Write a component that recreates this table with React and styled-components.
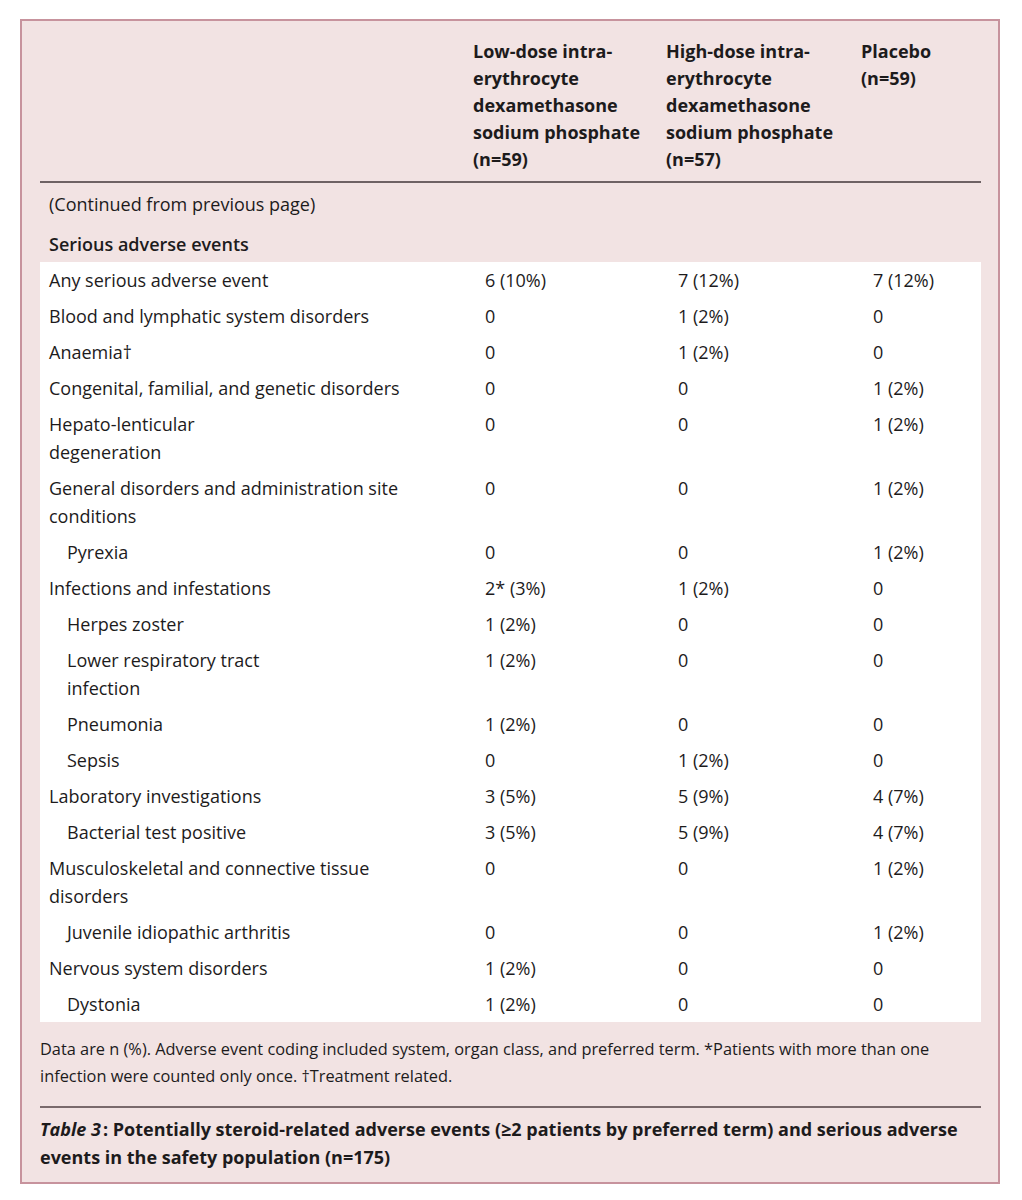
import styled, { createGlobalStyle } from 'styled-components'

const GlobalStyle = createGlobalStyle`
  body {
    margin: 0;
    background: #ffffff;
    font-family: 'Open Sans', 'Noto Sans', sans-serif;
    color: #1d1b1c;
  }
`

const rows = [
  { label: 'Any serious adverse event', values: ['6 (10%)', '7 (12%)', '7 (12%)'] },
  { label: 'Blood and lymphatic system disorders', values: ['0', '1 (2%)', '0'] },
  { label: 'Anaemia†', values: ['0', '1 (2%)', '0'] },
  { label: 'Congenital, familial, and genetic disorders', values: ['0', '0', '1 (2%)'] },
  { label: 'Hepato-lenticular degeneration', values: ['0', '0', '1 (2%)'], narrow: true },
  { label: 'General disorders and administration site conditions', values: ['0', '0', '1 (2%)'] },
  { label: 'Pyrexia', values: ['0', '0', '1 (2%)'], indent: true },
  { label: 'Infections and infestations', values: ['2* (3%)', '1 (2%)', '0'] },
  { label: 'Herpes zoster', values: ['1 (2%)', '0', '0'], indent: true },
  { label: 'Lower respiratory tract infection', values: ['1 (2%)', '0', '0'], indent: true, narrow: true },
  { label: 'Pneumonia', values: ['1 (2%)', '0', '0'], indent: true },
  { label: 'Sepsis', values: ['0', '1 (2%)', '0'], indent: true },
  { label: 'Laboratory investigations', values: ['3 (5%)', '5 (9%)', '4 (7%)'] },
  { label: 'Bacterial test positive', values: ['3 (5%)', '5 (9%)', '4 (7%)'], indent: true },
  { label: 'Musculoskeletal and connective tissue disorders', values: ['0', '0', '1 (2%)'] },
  { label: 'Juvenile idiopathic arthritis', values: ['0', '0', '1 (2%)'], indent: true },
  { label: 'Nervous system disorders', values: ['1 (2%)', '0', '0'] },
  { label: 'Dystonia', values: ['1 (2%)', '0', '0'], indent: true },
]

const headers = [
  ['Low-dose intra-', 'erythrocyte', 'dexamethasone', 'sodium phosphate', '(n=59)'],
  ['High-dose intra-', 'erythrocyte', 'dexamethasone', 'sodium phosphate', '(n=57)'],
  ['Placebo', '(n=59)'],
]

export default function App() {
  return (
    <>
      <GlobalStyle />
      <Frame>
        <HeaderRow>
          <span />
          {headers.map((lines, i) => (
            <HeadCell key={i}>
              {lines.map((l, j) => (
                <div key={j}>{l}</div>
              ))}
            </HeadCell>
          ))}
        </HeaderRow>

        <Note>(Continued from previous page)</Note>
        <Section>Serious adverse events</Section>

        <Body>
          {rows.map(r => (
            <Row key={r.label}>
              <Label indent={r.indent} narrow={r.narrow}>
                {r.label}
              </Label>
              {r.values.map((v, i) => (
                <Value key={i}>{v}</Value>
              ))}
            </Row>
          ))}
        </Body>

        <Footnote>
          Data are n (%). Adverse event coding included system, organ class, and preferred term.
          *Patients with more than one infection were counted only once. †Treatment related.
        </Footnote>

        <Caption>
          <em>Table 3</em>: Potentially steroid-related adverse events (≥2 patients by preferred
          term) and serious adverse events in the safety population (n=175)
        </Caption>
      </Frame>
    </>
  )
}

// Style
const Frame = styled.div`
  box-sizing: border-box;
  width: 980px;
  margin: 19px 0 0 20px;
  padding: 17px 17px 11px 18px;

  border: 2px solid #c7939d;
  background: #f2e3e3;
`

const grid = `
  display: grid;
  grid-template-columns: 433px 193px 195px 1fr;
`

const HeaderRow = styled.div`
  ${grid};
  padding-bottom: 8px;
  border-bottom: 2px solid #6e6264;

  font-size: 18px;
  font-weight: 700;
  line-height: 27px;
`

const HeadCell = styled.div`
  white-space: nowrap;
`

const Note = styled.div`
  padding: 7px 0 0 9px;
  font-size: 18px;
  line-height: 28px;
`

const Section = styled.div`
  padding: 12px 0 4px 9px;
  font-size: 18px;
  font-weight: 600;
  line-height: 28px;
`

const Body = styled.div`
  background: #ffffff;
`

const Row = styled.div`
  ${grid};
  padding: 4px 0;
  font-size: 18px;
  line-height: 28px;
`

const Label = styled.div`
  padding-left: ${p => (p.indent ? 27 : 9)}px;
  padding-right: ${p => (p.narrow ? 200 : 20)}px;
`

const Value = styled.div`
  padding-left: 12px;
  white-space: nowrap;
`

const Footnote = styled.p`
  margin: 0;
  padding: 14px 0 16px;
  border-bottom: 2px solid #7a6a6c;

  font-size: 16.35px;
  line-height: 27px;
`

const Caption = styled.p`
  margin: 0;
  padding-top: 7px;

  font-size: 18px;
  font-weight: 700;
  line-height: 28px;

  em {
    font-style: italic;
    padding-right: 2px;
  }
`
